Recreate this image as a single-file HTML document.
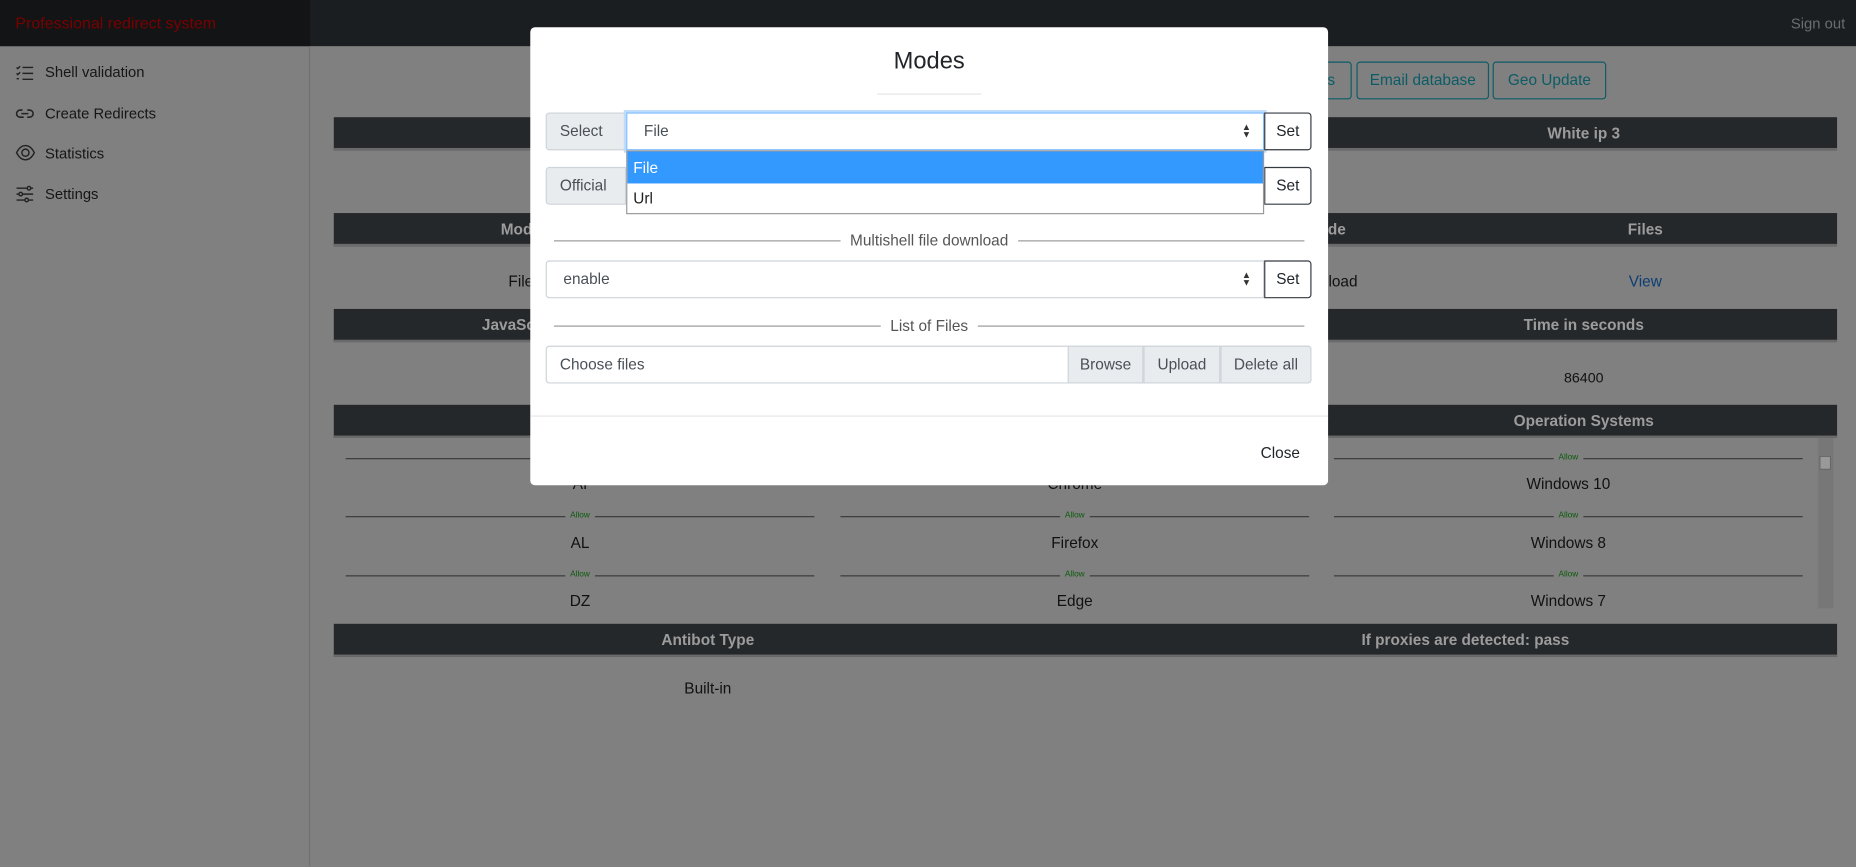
<!DOCTYPE html>
<html><head><meta charset="utf-8"><style>
html,body{margin:0;padding:0;width:1856px;height:867px;overflow:hidden;background:#808080;}
#w{position:absolute;left:0;top:0;width:1568px;height:732px;transform:scale(1.18367);transform-origin:0 0;font-family:"Liberation Sans",sans-serif;font-size:13px;color:#111;}
.a{position:absolute;}
.c{position:absolute;transform:translateX(-50%);white-space:nowrap;}
.hd{position:absolute;left:282px;width:1270px;height:26px;background:#25282b;border-bottom:2px solid #6a6a6a;}
.ht{position:absolute;transform:translateX(-50%);color:#9c9c9c;font-weight:bold;font-size:13px;top:6px;white-space:nowrap;}
.side{position:absolute;left:38px;font-size:12.5px;color:#161616;}
.btn{position:absolute;top:52px;height:30px;border:1px solid #0b5c66;border-radius:3px;color:#0b5c66;font-size:13px;line-height:30px;text-align:center;}
.ln{position:absolute;height:1px;background:#3a3a3a;}
.al{position:absolute;font-size:7px;color:#0b5a0b;transform:translateX(-50%);background:#808080;padding:0 4px;}
.m{position:absolute;left:448px;top:23px;width:674px;height:387px;background:#fff;border-radius:4px;}
.m *{box-sizing:border-box;}
.ad{position:absolute;background:#e9ecef;border:1px solid #ced4da;color:#495057;border-radius:3px 0 0 3px;padding-left:11px;line-height:30px;}
.set{position:absolute;border:1px solid #343a40;border-radius:0 3px 3px 0;text-align:center;line-height:30px;color:#212529;background:#fff;}
.sel{position:absolute;border:1px solid #ced4da;background:#fff;color:#495057;line-height:30px;padding-left:14px;}
.arr{position:absolute;right:10px;top:9px;font-size:8px;line-height:6px;color:#333;}
.dv{position:absolute;left:20px;width:634px;height:1px;background:#999;}
.dt{position:absolute;transform:translate(-50%,-50%);background:#fff;padding:0 8px;color:#555;font-size:13px;white-space:nowrap;}
</style></head><body><div id="w">
<div class="a" style="left:0;top:0;width:1568px;height:39px;background:#1b1e21;"></div>
<div class="a" style="left:0;top:0;width:262px;height:39px;background:#121416;"></div>
<div class="a" style="left:13px;top:12px;color:#7a0000;font-size:13.5px;">Professional redirect system</div>
<div class="a" style="left:1513px;top:13px;color:#6a6c6e;font-size:12.5px;">Sign out</div>
<div class="a" style="left:261px;top:39px;width:1px;height:693px;background:#707070;"></div>
<svg class="a" style="left:13px;top:54px" width="16" height="16" viewBox="0 0 16 16" fill="none" stroke="#222" stroke-width="1.2"><path d="M6 3h9M6 8h9M6 13h9M1 3l1 1 2-2M1 8l1 1 2-2M1 12.5h2"/></svg>
<div class="side" style="top:54px">Shell validation</div>
<svg class="a" style="left:13px;top:89px" width="16" height="14" viewBox="0 0 16 14" fill="none" stroke="#222" stroke-width="1.3"><path d="M6 4H4a3 3 0 0 0 0 6h3M10 4h2a3 3 0 0 1 0 6h-2M5 7h6"/></svg>
<div class="side" style="top:89px">Create Redirects</div>
<svg class="a" style="left:13px;top:122px" width="17" height="14" viewBox="0 0 17 14" fill="none" stroke="#222" stroke-width="1.2"><path d="M1 7c2-4 4.5-6 7.5-6s5.5 2 7.5 6c-2 4-4.5 6-7.5 6S3 11 1 7z"/><circle cx="8.5" cy="7" r="3"/></svg>
<div class="side" style="top:123px">Statistics</div>
<svg class="a" style="left:13px;top:156px" width="16" height="16" viewBox="0 0 16 16" fill="none" stroke="#222" stroke-width="1.2"><path d="M1 3h9M13 3h2M1 8h2M6 8h9M1 13h7M11 13h4"/><circle cx="11.5" cy="3" r="1.5"/><circle cx="4.5" cy="8" r="1.5"/><circle cx="9.5" cy="13" r="1.5"/></svg>
<div class="side" style="top:157px">Settings</div>
<div class="btn" style="left:1100px;width:40px;">gs</div>
<div class="btn" style="left:1146px;width:110px;">Email database</div>
<div class="btn" style="left:1261px;width:94px;">Geo Update</div>
<div class="hd" style="top:99px"><div class="ht" style="left:1056px">White ip 3</div></div>
<div class="hd" style="top:180px"><div class="ht" style="left:158px">Mode</div><div class="ht" style="left:838px">Mode</div><div class="ht" style="left:1108px">Files</div></div>
<div class="c" style="left:440px;top:230px">File</div>
<div class="c" style="left:1118px;top:230px">Download</div>
<div class="c" style="left:1390px;top:230px;color:#0c3d73">View</div>
<div class="hd" style="top:261px"><div class="ht" style="left:158px">JavaScript</div><div class="ht" style="left:1056px">Time in seconds</div></div>
<div class="c" style="left:1338px;top:312px;font-size:12px">86400</div>
<div class="hd" style="top:342px"><div class="ht" style="left:1056px">Operation Systems</div></div>
<div class="a" style="left:1536px;top:370px;width:13px;height:144px;background:#777"></div>
<div class="a" style="left:1537px;top:385px;width:10px;height:12px;background:#999;border:1px solid #666;box-sizing:border-box"></div>
<div class="ln" style="left:292px;top:387px;width:396px"></div><div class="ln" style="left:710px;top:387px;width:396px"></div><div class="ln" style="left:1127px;top:387px;width:396px"></div>
<div class="al" style="left:490px;top:383px">Allow</div><div class="al" style="left:908px;top:383px">Allow</div><div class="al" style="left:1325px;top:383px">Allow</div>
<div class="c" style="left:490px;top:401px">AI</div><div class="c" style="left:908px;top:401px">Chrome</div>
<div class="c" style="left:1325px;top:401px">Windows 10</div>
<div class="ln" style="left:292px;top:436px;width:396px"></div><div class="ln" style="left:710px;top:436px;width:396px"></div><div class="ln" style="left:1127px;top:436px;width:396px"></div>
<div class="al" style="left:490px;top:432px">Allow</div><div class="al" style="left:908px;top:432px">Allow</div><div class="al" style="left:1325px;top:432px">Allow</div>
<div class="c" style="left:490px;top:451px">AL</div><div class="c" style="left:908px;top:451px">Firefox</div><div class="c" style="left:1325px;top:451px">Windows 8</div>
<div class="ln" style="left:292px;top:486px;width:396px"></div><div class="ln" style="left:710px;top:486px;width:396px"></div><div class="ln" style="left:1127px;top:486px;width:396px"></div>
<div class="al" style="left:490px;top:482px">Allow</div><div class="al" style="left:908px;top:482px">Allow</div><div class="al" style="left:1325px;top:482px">Allow</div>
<div class="c" style="left:490px;top:500px">DZ</div><div class="c" style="left:908px;top:500px">Edge</div><div class="c" style="left:1325px;top:500px">Windows 7</div>
<div class="hd" style="top:527px"><div class="ht" style="left:316px">Antibot Type</div><div class="ht" style="left:956px">If proxies are detected: pass</div></div>
<div class="c" style="left:598px;top:574px">Built-in</div>
<div class="m">
 <div class="c" style="left:337px;top:18px;font-size:20px;color:#212529">Modes</div>
 <div class="a" style="left:293px;top:56px;width:88px;height:1px;background:#e5e5e5"></div>
 <div class="ad" style="left:13px;top:72px;width:68px;height:32px;">Select</div>
 <div class="sel" style="left:81px;top:72px;width:539px;height:32px;border:1px solid #80bdff;box-shadow:0 0 0 2px #bcdcfd;">File<div class="arr">▲<br>▼</div></div>
 <div class="set" style="left:620px;top:72px;width:40px;height:32px;">Set</div>
 <div class="ad" style="left:13px;top:118px;width:68px;height:32px;">Official</div>
 <div class="set" style="left:620px;top:118px;width:40px;height:32px;">Set</div>
 <div class="a" style="left:81px;top:104px;width:539px;height:54px;border:1px solid #999;background:#fff;">
  <div class="a" style="left:0;top:0;width:537px;height:27px;background:#3399ff;color:#fff;line-height:27px;padding-left:5px;">File</div>
  <div class="a" style="left:0;top:27px;height:26px;line-height:26px;padding-left:5px;color:#222">Url</div>
 </div>
 <div class="dv" style="top:180px"></div><div class="dt" style="left:337px;top:180px">Multishell file download</div>
 <div class="sel" style="left:13px;top:197px;width:607px;height:32px;border-radius:3px 0 0 3px">enable<div class="arr">▲<br>▼</div></div>
 <div class="set" style="left:620px;top:197px;width:40px;height:32px;">Set</div>
 <div class="dv" style="top:252px"></div><div class="dt" style="left:337px;top:252px">List of Files</div>
 <div class="sel" style="left:13px;top:269px;width:647px;height:32px;border-radius:3px;padding-left:11px;color:#495057">Choose files</div>
 <div class="ad" style="left:454px;top:269px;width:64px;height:32px;border-radius:0;padding:0;text-align:center">Browse</div>
 <div class="ad" style="left:518px;top:269px;width:65px;height:32px;border-radius:0;padding:0;text-align:center">Upload</div>
 <div class="ad" style="left:583px;top:269px;width:77px;height:32px;border-radius:0 3px 3px 0;padding:0;text-align:center">Delete all</div>
 <div class="a" style="left:0;top:328px;width:674px;height:1px;background:#e5e5e5"></div>
 <div class="a" style="left:617px;top:352px;color:#212529">Close</div>
</div>
</div></body></html>
